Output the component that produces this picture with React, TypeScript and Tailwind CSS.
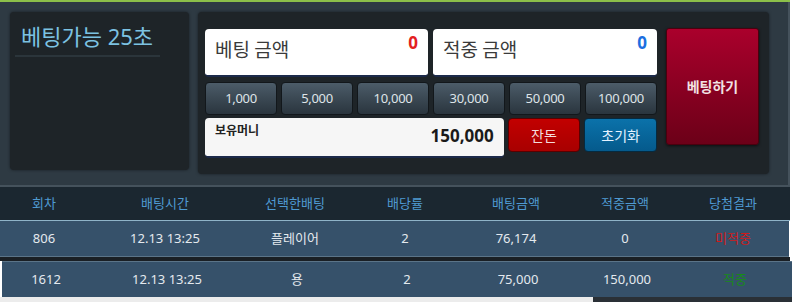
const font = { fontFamily: '"Noto Sans", "Noto Sans CJK KR", sans-serif' }

const chips = ["1,000", "5,000", "10,000", "30,000", "50,000", "100,000"]

const cols = "grid grid-cols-[88px_154px_106px_114px_108px_110px_106px] items-center text-center"

const rows = [
    { no: "806", time: "12.13 13:25", pick: "플레이어", odds: "2", bet: "76,174", win: "0", result: "미적중", win_: false },
    { no: "1612", time: "12.13 13:25", pick: "용", odds: "2", bet: "75,000", win: "150,000", result: "적중", win_: true },
]

export default function App() {
    return (
        <div className="w-[800px] h-[302px] bg-white overflow-hidden" style={font}>
            <div className="w-[790px] h-[2px] bg-[#8cc04a]" />
            {/* top panel */}
            <div className="w-[790px] h-[185px] bg-[#2e3a43] border-r-2 border-b-2 border-[#45525c] flex items-start pt-[10px] pl-[10px]">
                <div className="w-[179px] h-[158px] bg-[#1e2428] rounded-[4px] shadow-[0_0_3px_rgba(0,0,0,0.5)] px-[5px] pt-[10px]">
                    <div className="text-[22px] leading-[28px] text-[#7cc2e2] pl-[6px]">베팅가능 25초</div>
                    <div className="mt-[5px] w-[145px] h-[2px] bg-[#2b353b]" />
                </div>

                <div className="ml-[9px] w-[571px] h-[162px] bg-[#1e2428] rounded-[4px] shadow-[0_0_3px_rgba(0,0,0,0.5)] flex items-start pt-[16px] pl-[7px]">
                    <div className="w-[452px] flex flex-col">
                        <div className="flex gap-[5px] mt-[1px]">
                            <div className="w-[223px] h-[48px] bg-white rounded-[4px] border-b-2 border-[#1c2a4a] flex items-start justify-between px-[10px]">
                                <span className="text-[19px] leading-[20px] mt-[10px] text-[#3a3a3a]" style={{ fontFamily: '"Noto Sans CJK KR", sans-serif' }}>베팅 금액</span>
                                <span className="text-[17px] leading-[20px] mt-[4px] font-bold text-[#e32020]">0</span>
                            </div>
                            <div className="w-[224px] h-[48px] bg-white rounded-[4px] border-b-2 border-[#1c2a4a] flex items-start justify-between px-[10px]">
                                <span className="text-[19px] leading-[20px] mt-[10px] text-[#3a3a3a]" style={{ fontFamily: '"Noto Sans CJK KR", sans-serif' }}>적중 금액</span>
                                <span className="text-[17px] leading-[20px] mt-[4px] font-bold text-[#1b6fe0]">0</span>
                            </div>
                        </div>
                        <div className="flex gap-[4px] mt-[5px]">
                            {chips.map((c) => (
                                <button key={c} className="w-[72px] h-[33px] rounded-[4px] border border-[#12171b] bg-gradient-to-b from-[#4c5c69] to-[#2a353e] text-[13px] text-[#dfe4e8] tracking-[-0.3px]">
                                    {c}
                                </button>
                            ))}
                        </div>
                        <div className="flex gap-[4px] mt-[3px] items-start">
                            <div className="w-[300px] h-[40px] bg-[#f6f6f6] rounded-[4px] border-b-2 border-[#1c2a4a] flex items-start justify-between px-[10px]">
                                <span className="text-[12px] leading-[14px] mt-[6px] font-bold text-[#222]">보유머니</span>
                                <span className="text-[17px] leading-[20px] mt-[8px] font-bold text-[#1a1a1a]">150,000</span>
                            </div>
                            <button className="w-[73px] h-[34px] rounded-[4px] border border-[#5a0000] bg-gradient-to-b from-[#c20000] to-[#a80000] text-[14px] text-[#f4dcdc]">잔돈</button>
                            <button className="w-[73px] h-[34px] rounded-[4px] border border-[#052a40] bg-gradient-to-b from-[#0b72aa] to-[#055a8c] text-[14px] text-[#e4f2ff]">초기화</button>
                        </div>
                    </div>
                    <button className="ml-[9px] w-[93px] h-[117px] rounded-[3px] border border-[#4a000e] bg-gradient-to-b from-[#aa002c] to-[#6c0018] shadow-[0_1px_3px_rgba(0,0,0,0.6)] text-[14px] font-bold text-[#f2e2e4]">
                        베팅하기
                    </button>
                </div>
            </div>

            {/* history table */}
            <div className={`${cols} w-[790px] h-[34px] bg-[#1b2730] border-b border-[#8fb3c8] text-[13px] text-[#4f9ad2]`}>
                {["회차", "배팅시간", "선택한배팅", "배당률", "배팅금액", "적중금액", "당첨결과"].map((h) => (
                    <div key={h}>{h}</div>
                ))}
            </div>
            {rows.map((r, i) => (
                <div key={r.no}>
                    {i > 0 && <div className="w-[790px] h-[4px] bg-[#1a1f24]" />}
                    <div className={`${cols} h-[36px] bg-[#36516a] text-[13px] text-[#e4e9ee] ${i > 0 ? "ml-[2px] w-[790px] border-t border-[#5b7488]" : "w-[789px] border-b border-[#5b7488]"}`}>
                        <div>{r.no}</div>
                        <div>{r.time}</div>
                        <div>{r.pick}</div>
                        <div>{r.odds}</div>
                        <div>{r.bet}</div>
                        <div>{r.win}</div>
                        <div className={r.win_ ? "text-[#188a18]" : "text-[#d01a1a]"}>{r.result}</div>
                    </div>
                </div>
            ))}
            <div className="flex h-[6px]">
                <div className="w-[593px] bg-[#ececec]" />
                <div className="w-[199px] bg-[#2a3036]" />
            </div>
        </div>
    )
}
